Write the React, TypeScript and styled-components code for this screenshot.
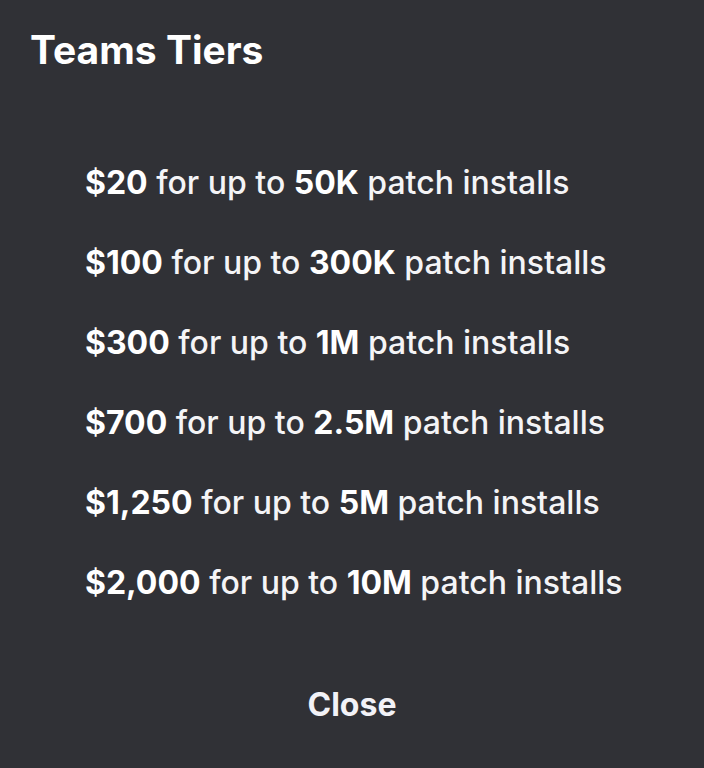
import { createGlobalStyle, styled } from 'styled-components';

const tiers = [
  { price: '$20', limit: '50K' },
  { price: '$100', limit: '300K' },
  { price: '$300', limit: '1M' },
  { price: '$700', limit: '2.5M' },
  { price: '$1,250', limit: '5M' },
  { price: '$2,000', limit: '10M' },
];

const GlobalStyle = createGlobalStyle`
  html, body {
    margin: 0;
    padding: 0;
    background: #303136;
    font-family: Inter, 'Noto Sans', sans-serif;
  }
`;

const App = () => {
  return (
    <Dialog>
      <GlobalStyle />
      <Title>Teams Tiers</Title>
      <TierList>
        {tiers.map((tier) => (
          <Tier key={tier.price}>
            <strong>{tier.price}</strong> for up to <strong>{tier.limit}</strong> patch installs
          </Tier>
        ))}
      </TierList>
      <Actions>
        <CloseButton type="button">Close</CloseButton>
      </Actions>
    </Dialog>
  );
};

const Dialog = styled.div`
  box-sizing: border-box;
  width: 704px;
  height: 768px;
  padding: 26px 30px 0;
  display: flex;
  flex-direction: column;
  background: #303136;
  color: #ffffff;
`;

const Title = styled.h2`
  margin: 0;
  font-size: 39px;
  line-height: 48px;
  font-weight: 700;
`;

const TierList = styled.ul`
  list-style: none;
  margin: 89px 0 0;
  padding: 0 0 0 55px;
  display: flex;
  flex-direction: column;
  gap: 40px;
`;

const Tier = styled.li`
  font-size: 32px;
  line-height: 40px;
  font-weight: 500;
  color: #f4f4f6;

  strong {
    font-weight: 700;
    color: #ffffff;
  }
`;

const Actions = styled.div`
  display: flex;
  justify-content: center;
  margin-top: 82px;
`;

const CloseButton = styled.button`
  background: none;
  border: none;
  padding: 0;
  font-family: inherit;
  font-size: 32px;
  line-height: 40px;
  font-weight: 700;
  color: #f2f2f7;
  cursor: pointer;
`;

export default App;
